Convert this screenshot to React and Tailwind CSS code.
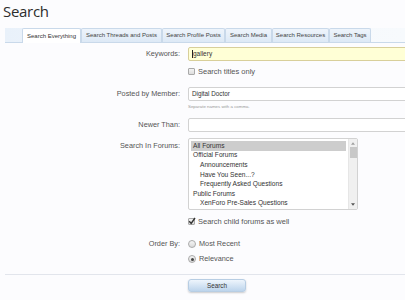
import React from "react";

const F = { fontFamily: '"Liberation Sans", Arial, sans-serif' };

function Checkbox({ checked }) {
  return (
    <span className="relative inline-block w-[7px] h-[7px] border border-[#a9a9a9] rounded-[1px] bg-gradient-to-b from-[#f4f4f4] to-[#dcdcdc] shrink-0">
      {checked && (
        <svg viewBox="0 0 8 8" className="absolute left-[-1px] top-[-2px] w-[8px] h-[8px]">
          <path d="M1.2 4.2 L3.2 6.4 L7 1" fill="none" stroke="#333" strokeWidth="1.4" />
        </svg>
      )}
    </span>
  );
}

function Radio({ checked }) {
  return (
    <span className="relative inline-flex items-center justify-center w-[8px] h-[8px] border border-[#aaaaaa] rounded-full bg-gradient-to-b from-[#f5f5f5] to-[#dadada] shrink-0">
      {checked && <span className="w-[3px] h-[3px] rounded-full bg-[#444]" />}
    </span>
  );
}

const tabs = [
  ["Search Everything", 59],
  ["Search Threads and Posts", 81],
  ["Search Profile Posts", 63],
  ["Search Media", 47],
  ["Search Resources", 57],
  ["Search Tags", 42],
];

const forums = [
  ["All Forums", 0, true],
  ["Official Forums", 0],
  ["Announcements", 1],
  ["Have You Seen...?", 1],
  ["Frequently Asked Questions", 1],
  ["Public Forums", 0],
  ["XenForo Pre-Sales Questions", 1],
];

function Row({ label, children, className = "" }) {
  return (
    <div className={"grid grid-cols-[180px_1fr] gap-x-[8px] " + className}>
      <div className="text-right text-[7.3px] text-[#555] flex items-center justify-end">{label}</div>
      <div className="flex items-center min-w-0">{children}</div>
    </div>
  );
}

export default function App() {
  return (
    <div className="w-[405px] h-[300px] overflow-hidden bg-[#fcfcfe] text-[#333]" style={F}>
      <div className="h-[28px] pl-[3px] pt-[2px]">
        <h1 className="text-[15px] leading-[18px] text-[#2d2d2d]" style={{ fontFamily: '"Open Sans", Arial, sans-serif', letterSpacing: "-0.3px" }}>
          Search
        </h1>
      </div>
      <div className="ml-[5px] h-[15px] flex items-end pl-[17px] border-b border-[#c9d9ea] bg-gradient-to-r from-[#e9f1fa] via-[#f4f8fc] to-[#f7fafd]">
        {tabs.map(([t, w], i) => (
          <div
            key={t}
            style={{ width: w }}
            className={
              "h-[14px] flex items-center justify-center text-[6px] border border-b-0 rounded-t-[2px] whitespace-nowrap " +
              (i === 0
                ? "bg-white border-[#c9d9ea] text-[#333] h-[15px] -mb-px"
                : "bg-gradient-to-b from-[#eef4fb] to-[#dde9f6] border-[#c9d9ea] text-[#444]")
            }
          >
            {t}
          </div>
        ))}
      </div>

      <Row label="Keywords:" className="mt-[4px] h-[14px]">
        <div className="w-[260px] shrink-0 h-[14px] border border-[#d8cf9a] bg-[#ffffd6] rounded-[2px] flex items-center pl-[3px] text-[6.5px] text-[#333]">
          <span className="w-px h-[8px] bg-[#222]" />
          gallery
        </div>
      </Row>
      <Row label="" className="mt-[5px] h-[10px]">
        <Checkbox />
        <span className="ml-[3px] text-[7.5px] text-[#555]">Search titles only</span>
      </Row>
      <Row label="Posted by Member:" className="mt-[11px] h-[14px]">
        <div className="w-[260px] shrink-0 h-[14px] border border-[#d2d2d2] bg-white rounded-[2px] flex items-center pl-[3px] text-[6.3px] text-[#333]">
          Digital Doctor
        </div>
      </Row>
      <Row label="" className="mt-[2px] h-[8px]">
        <span className="text-[4.4px] text-[#999]">Separate names with a comma.</span>
      </Row>
      <Row label="Newer Than:" className="mt-[7px] h-[14px]">
        <div className="w-[260px] shrink-0 h-[14px] border border-[#d2d2d2] bg-white rounded-[2px]" />
      </Row>
      <div className="grid grid-cols-[180px_1fr] gap-x-[8px] mt-[6px]">
        <div className="text-right text-[7.3px] text-[#555] pt-[3px]">Search In Forums:</div>
        <div>
          <div className="w-[170px] h-[72px] border border-[#d2d2d2] bg-white rounded-[2px] flex overflow-hidden">
            <div className="flex-1 pt-[2px] pl-[2px] pr-[2px]">
              {forums.map(([f, ind, sel]) => (
                <div
                  key={f}
                  className={"h-[9.6px] flex items-center text-[6.6px] text-[#333] whitespace-nowrap " + (sel ? "bg-[#cdcdcd]" : "")}
                  style={{ paddingLeft: ind ? 9 : 2 }}
                >
                  {f}
                </div>
              ))}
            </div>
            <div className="w-[9px] bg-[#f0f0f0] border-l border-[#e6e6e6] flex flex-col items-center">
              <svg viewBox="0 0 6 4" className="w-[4px] h-[3px] mt-[3px]">
                <path d="M0 4 L3 0 L6 4 Z" fill="#a0a0a0" />
              </svg>
              <div className="w-[7px] h-[11px] bg-[#c8c8c8] mt-[2px]" />
              <div className="flex-1" />
              <svg viewBox="0 0 6 4" className="w-[4px] h-[3px] mb-[3px]">
                <path d="M0 0 L6 0 L3 4 Z" fill="#555" />
              </svg>
            </div>
          </div>
        </div>
      </div>
      <Row label="" className="mt-[6px] h-[10px]">
        <Checkbox checked />
        <span className="ml-[3px] text-[7.5px] text-[#555]">Search child forums as well</span>
      </Row>
      <Row label="Order By:" className="mt-[13px] h-[10px]">
        <Radio />
        <span className="ml-[3px] text-[7.3px] text-[#555]">Most Recent</span>
      </Row>
      <Row label="" className="mt-[5px] h-[10px]">
        <Radio checked />
        <span className="ml-[3px] text-[7.3px] text-[#555]">Relevance</span>
      </Row>
      <div className="ml-[5px] mt-[10px] border-t border-[#e2e5ec]" />
      <div className="grid grid-cols-[180px_1fr] gap-x-[8px] mt-[4px]">
        <div />
        <div>
          <button className="w-[58px] h-[13px] rounded-[3px] border border-[#b7cde3] bg-gradient-to-b from-[#eef5fc] to-[#bcd4ec] text-[6.3px] text-[#333] shadow-[0_1px_2px_rgba(0,0,0,0.2)] flex items-center justify-center">
            Search
          </button>
        </div>
      </div>
    </div>
  );
}
